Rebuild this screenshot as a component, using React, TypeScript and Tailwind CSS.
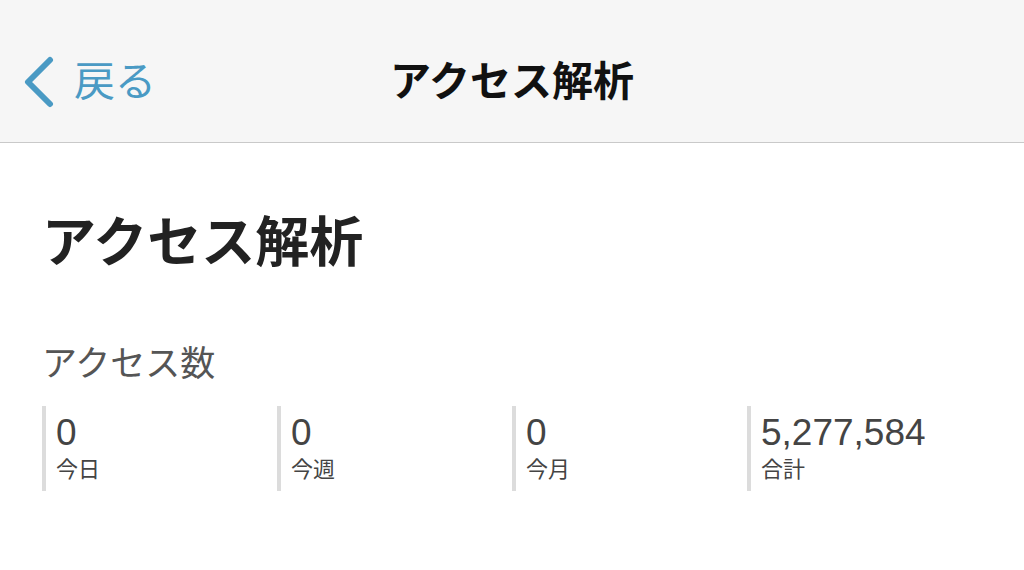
const stats = [
  { value: "0", label: "今日" },
  { value: "0", label: "今週" },
  { value: "0", label: "今月" },
  { value: "5,277,584", label: "合計" },
];

const jp = { fontFamily: '"Liberation Sans", "Noto Sans CJK JP", sans-serif' };

export default function App() {
  return (
    <div className="w-[1024px] h-[570px] bg-white overflow-hidden" style={jp}>
      <div className="h-[143px] pt-[22px] bg-[#f6f6f6] border-b border-[#c9c9c9] grid grid-cols-[1fr_auto_1fr] items-center">
        <div className="flex items-center pl-[20px]">
          <svg width="36" height="52" viewBox="0 0 36 52" className="text-[#4a9ac4]">
            <path d="M30 4 L8 26 L30 48" fill="none" stroke="currentColor" strokeWidth="6" strokeLinecap="round" strokeLinejoin="round" />
          </svg>
          <span className="ml-[18px] text-[41px] leading-none text-[#4a9ac4]">戻る</span>
        </div>
        <div className="text-[41px] leading-none font-bold text-[#111]">アクセス解析</div>
        <div />
      </div>

      <div className="pl-[42px]">
        <h1 className="mt-[73px] text-[54px] leading-none font-bold text-[#222]">アクセス解析</h1>
        <h2 className="mt-[76px] text-[35px] leading-none text-[#555]">アクセス数</h2>
        <div className="mt-[25px] grid grid-cols-4 w-[940px]">
          {stats.map((s) => (
            <div key={s.label} className="border-l-4 border-[#dcdcdc] pl-[10px] h-[85px] flex flex-col pt-[8px]">
              <div className="text-[37px] leading-none text-[#444]">{s.value}</div>
              <div className="mt-[8px] text-[22px] leading-none text-[#444]">{s.label}</div>
            </div>
          ))}
        </div>
      </div>
    </div>
  );
}
